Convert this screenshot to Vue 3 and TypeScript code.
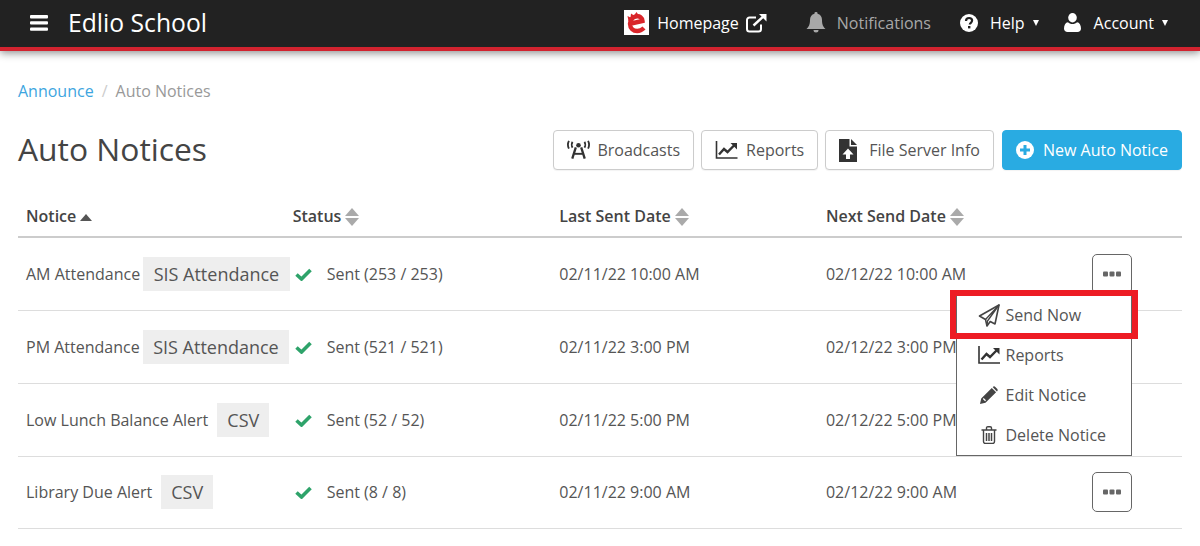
<script setup lang="ts">
interface Row {
  name: string
  tag: string
  sent: string
  last: string
  next: string
}
const rows: Row[] = [
  { name: 'AM Attendance', tag: 'SIS Attendance', sent: 'Sent (253 / 253)', last: '02/11/22 10:00 AM', next: '02/12/22 10:00 AM' },
  { name: 'PM Attendance', tag: 'SIS Attendance', sent: 'Sent (521 / 521)', last: '02/11/22 3:00 PM', next: '02/12/22 3:00 PM' },
  { name: 'Low Lunch Balance Alert', tag: 'CSV', sent: 'Sent (52 / 52)', last: '02/11/22 5:00 PM', next: '02/12/22 5:00 PM' },
  { name: 'Library Due Alert', tag: 'CSV', sent: 'Sent (8 / 8)', last: '02/11/22 9:00 AM', next: '02/12/22 9:00 AM' }
]
</script>

<template>
  <div class="page">
    <header class="nav">
      <div class="nav-left">
        <svg class="burger" width="18" height="16" viewBox="0 0 18 16"><rect y="0" width="18" height="3.4" rx="1" /><rect y="6.2" width="18" height="3.4" rx="1" /><rect y="12.4" width="18" height="3.4" rx="1" /></svg>
        <span class="brand">Edlio School</span>
      </div>
      <nav class="nav-right">
        <span class="nav-item home">
          <svg class="logo" width="25" height="25" viewBox="0 0 25 25"><rect width="25" height="25" fill="#fff" /><path d="M7 13.500 18.500 11C18.200 7.500 15.500 6 13 6.300 8.800 6.800 6 9.700 6 13.800 6 18.200 9.300 21 13.200 21c2.800 0 4.700-1 6.800-3" fill="none" stroke="#d9252a" stroke-width="4.400" /><path d="M4.500 11 3.500 6l3 1.500L7 3.500l3 2L12.500 2l2 3-5 4z" fill="#d9252a" /></svg>
          <span>Homepage</span>
          <svg class="ext" width="22" height="20" viewBox="0 0 22 20" fill="none" stroke="#fff" stroke-width="2"><path d="M15 11.500V16a2.500 2.500 0 0 1-2.500 2.500h-9A2.500 2.500 0 0 1 1 16V7a2.500 2.500 0 0 1 2.500-2.500H10" /><path d="M7.500 12.500 19 2" stroke-width="2.400" /><path d="M13 1h7.500v7.500z" fill="#fff" stroke="none" /></svg>
        </span>
        <span class="nav-item muted">
          <svg width="20" height="21" viewBox="0 0 20 21" fill="#a8a8a8"><path d="M10 0a1.500 1.500 0 0 1 1.500 1.800C14.500 2.500 16 5 16 8c0 5 1.500 7 3.500 9h-19C2.500 15 4 13 4 8c0-3 1.500-5.500 4.500-6.200A1.500 1.500 0 0 1 10 0z" /><path d="M7.500 18h5a2.500 2.500 0 0 1-5 0z" /></svg>
          <span>Notifications</span>
        </span>
        <span class="nav-item help">
          <svg width="18" height="18" viewBox="0 0 18 18"><circle cx="9" cy="9" r="9" fill="#fff" /><path d="M6 7c0-1.800 1.300-3 3.100-3 1.800 0 3 1.100 3 2.600 0 2.200-2.300 2.200-2.300 3.900" fill="none" stroke="#222" stroke-width="2.200" /><rect x="8" y="12" width="2.400" height="2.400" fill="#222" /></svg>
          <span>Help</span>
          <i class="caret"></i>
        </span>
        <span class="nav-item acct">
          <svg width="17" height="19" viewBox="0 0 17 19" fill="#fff"><ellipse cx="8.500" cy="4.700" rx="4.300" ry="4.700" /><path d="M0 15.500C0 12 1.500 9.500 4 9.200c1 1.200 2.800 1.800 4.500 1.800s3.500-.6 4.500-1.800c2.500.3 4 2.800 4 6.300 0 2.300-1.500 3.500-3.500 3.500h-10C1.500 19 0 17.800 0 15.500z" /></svg>
          <span>Account</span>
          <i class="caret"></i>
        </span>
      </nav>
    </header>

    <main class="content">
      <div class="crumbs">
        <a class="crumb-link">Announce</a>
        <span class="crumb-sep">/</span>
        <span class="crumb-cur">Auto Notices</span>
      </div>

      <div class="title-row">
        <h1 class="title">Auto Notices</h1>
        <div class="actions">
          <button class="btn tight">
            <svg width="23" height="20" viewBox="0 0 24 20" fill="none" stroke="#333"><path d="M9.200 7.200 5.500 19M14.800 7.200 18.500 19" stroke-width="2.400" /><path d="M7.500 14h9" stroke-width="2" /><circle cx="12" cy="5" r="2.400" fill="#333" stroke="none" /><path d="M5.800 1.500C4.700 3 4.700 6 5.800 7.500M18.200 1.500c1.100 1.500 1.100 4.500 0 6" stroke-width="1.900" /><path d="M2 0.500C.7 3 .7 6 2 8.500M22 .5c1.300 2.500 1.300 5.500 0 8" stroke-width="1.900" /></svg>
            Broadcasts
          </button>
          <button class="btn">
            <svg width="23" height="18" viewBox="0 0 22 18" fill="none" stroke="#333"><path d="M1 0v17h21" stroke-width="1.600" /><path d="M3.500 13.500 8.500 8l3.500 3 7-7" stroke-width="2.400" /><path d="M15 2h6.500v6.500z" fill="#333" stroke="none" /></svg>
            Reports
          </button>
          <button class="btn">
            <svg class="file-icon" width="18" height="23" viewBox="0 0 18 23" fill="#333"><path fill-rule="evenodd" d="M0 0h10.500v7.500H18V23H0zM9 9.500l-5.500 6h3.500V20h4v-4.500h3.500z" /><path d="M12 0l6 6h-6z" /></svg>
            File Server Info
          </button>
          <button class="btn primary">
            <svg width="18" height="18" viewBox="0 0 18 18"><circle cx="9" cy="9" r="9" fill="#fff" /><path d="M9 4v10M4 9h10" stroke="#29abe2" stroke-width="3" /></svg>
            New Auto Notice
          </button>
        </div>
      </div>

      <div class="table">
        <div class="row head">
          <div class="cell">Notice <svg class="asc" width="12" height="7" viewBox="0 0 12 7"><path d="M6 0l6 7H0z" fill="#555" /></svg></div>
          <div class="cell">Status <svg class="sort" width="14" height="18" viewBox="0 0 14 18"><path d="M7 0l7 8H0zM7 18l7-8H0z" fill="#aaa" /></svg></div>
          <div class="cell">Last Sent Date <svg class="sort" width="14" height="18" viewBox="0 0 14 18"><path d="M7 0l7 8H0zM7 18l7-8H0z" fill="#aaa" /></svg></div>
          <div class="cell">Next Send Date <svg class="sort" width="14" height="18" viewBox="0 0 14 18"><path d="M7 0l7 8H0zM7 18l7-8H0z" fill="#aaa" /></svg></div>
          <div class="cell"></div>
        </div>
        <div v-for="r in rows" :key="r.name" class="row body">
          <div class="cell name-cell">
            <span>{{ r.name }}</span>
            <span class="tag" :class="{ csv: r.tag === 'CSV' }">{{ r.tag }}</span>
          </div>
          <div class="cell status">
            <svg class="check" width="17" height="13" viewBox="0 0 17 13"><path d="M1.500 6.500 6.500 11 15.500 2" fill="none" stroke="#2ea36a" stroke-width="3.600" /></svg>
            <span>{{ r.sent }}</span>
          </div>
          <div class="cell">{{ r.last }}</div>
          <div class="cell">{{ r.next }}</div>
          <div class="cell more-cell">
            <button class="more" aria-label="More">
              <svg width="18" height="6" viewBox="0 0 18 6" fill="#666"><rect x="0" y="0.500" width="5" height="5" rx="1" /><rect x="6.500" y="0.500" width="5" height="5" rx="1" /><rect x="13" y="0.500" width="5" height="5" rx="1" /></svg>
            </button>
          </div>
        </div>
      </div>
    </main>

    <div class="menu">
      <div class="menu-item">
        <svg width="22" height="23" viewBox="0 0 22 23" fill="none" stroke="#444" stroke-width="1.600" stroke-linejoin="round"><path d="M21 1 1.500 12l6 3.500L9 22l3.200-4.500L17 20z" /><path d="M7.500 15.500 21 1 9.500 17 9 22" stroke-width="1.300" /></svg>
        <span>Send Now</span>
      </div>
      <div class="menu-item">
        <svg width="22" height="18" viewBox="0 0 22 18" fill="none" stroke="#333"><path d="M1 0v17h21" stroke-width="1.600" /><path d="M3.500 13.500 8.500 8l3.500 3 7-7" stroke-width="2.400" /><path d="M15 2h6.500v6.500z" fill="#333" stroke="none" /></svg>
        <span>Reports</span>
      </div>
      <div class="menu-item">
        <svg width="18" height="18" viewBox="0 0 18 18" fill="#444"><path d="M0 18l1.200-5.500L11.800 1.900l4.300 4.300L5.500 16.800zM2.800 12.900l2.300 2.300.9-.9-2.300-2.300z" fill-rule="evenodd" /><path d="M12.800.9a1.800 1.800 0 0 1 2.500 0l1.800 1.800a1.800 1.800 0 0 1 0 2.500l-.2.200-4.300-4.300z" /></svg>
        <span>Edit Notice</span>
      </div>
      <div class="menu-item">
        <svg class="trash" width="16" height="18" viewBox="0 0 16 18" fill="none" stroke="#444" stroke-width="1.400"><path d="M.5 4h15M2.500 4v11.500A2 2 0 0 0 4.500 17.500h7a2 2 0 0 0 2-2V4M5.500 4V2a1.300 1.300 0 0 1 1.300-1.300h2.400A1.300 1.300 0 0 1 10.500 2v2" /><path d="M5.500 7v8M8 7v8M10.500 7v8" stroke-width="1.500" /></svg>
        <span>Delete Notice</span>
      </div>
    </div>
    <div class="highlight"></div>
  </div>
</template>

<style>
html, body { margin: 0; background: #fff; }
</style>

<style scoped>
.page {
  position: relative;
  width: 1200px;
  height: 546px;
  overflow: hidden;
  background: #fff;
  font-family: "Open Sans", sans-serif;
  font-size: 16px;
  color: #555;
}
.nav {
  height: 47px;
  background: #222;
  border-bottom: 4px solid #d2232f;
  box-shadow: 0 2px 8px rgba(0, 0, 0, .45);
  display: flex;
  align-items: center;
  justify-content: space-between;
  color: #fff;
  padding: 0 32px 0 30px;
}
.nav-left { display: flex; align-items: center; gap: 20px; margin-top: -1px; }
.burger { fill: #fff; }
.brand { font-size: 24.700px; line-height: 46px; }
.nav-right { display: flex; align-items: center; margin-top: -2px; }
.nav-item { display: flex; align-items: center; font-size: 16px; }
.home { gap: 8px; margin-right: 38px; }
.home .ext { margin-left: -1px; }
.muted { gap: 11px; color: #a8a8a8; margin-right: 29px; }
.help { gap: 12px; margin-right: 25px; }
.help .caret { margin-left: -4px; }
.acct { gap: 13px; }
.caret {
  width: 0;
  height: 0;
  border-left: 3.500px solid transparent;
  border-right: 3.500px solid transparent;
  border-top: 6px solid #fff;
  margin-left: -5px;
}
.content { padding: 0 18px; }
.crumbs {
  margin-top: 29px;
  height: 22px;
  line-height: 22px;
  display: flex;
  gap: 8px;
}
.crumb-link { color: #3da5e0; }
.crumb-sep { color: #ccc; }
.crumb-cur { color: #999; }
.title-row {
  margin-top: 28px;
  height: 40px;
  display: flex;
  align-items: center;
  justify-content: space-between;
}
.title {
  margin: -4px 0 0;
  font-size: 31.800px;
  font-weight: 400;
  color: #444;
}
.actions { display: flex; gap: 7px; }
.actions .primary { margin-left: 1px; }
.btn {
  height: 40px;
  box-sizing: border-box;
  border: 1px solid #ccc;
  border-radius: 4px;
  background: #fff;
  color: #555;
  font: inherit;
  padding: 0 13px;
  display: flex;
  align-items: center;
  gap: 8px;
  box-shadow: 0 1px 1px rgba(0, 0, 0, .05);
}
.btn.tight { gap: 7px; }
.file-icon { margin-right: 4px; }
.btn.primary {
  background: #29abe2;
  border-color: #29abe2;
  color: #fff;
  gap: 9px;
}
.table { margin-top: 26px; }
.row {
  display: grid;
  grid-template-columns: 266.670px 266.670px 266.670px 266.670px 1fr;
  align-items: center;
}
.cell { padding: 0 8px; white-space: nowrap; }
.head {
  height: 40px;
  border-bottom: 2px solid #ccc;
  font-weight: 600;
  color: #444;
}
.head .cell { display: flex; align-items: center; gap: 4px; }
.asc { margin-top: 2px; }
.sort { margin-top: 2px; }
.body {
  height: 73px;
  box-sizing: border-box;
  border-bottom: 1px solid #ddd;
}
.body:last-child { height: 72px; padding-bottom: 1px; }
.name-cell { display: flex; align-items: center; gap: 3px; }
.tag {
  background: #eee;
  font-size: 18px;
  padding: 0 10.500px;
  line-height: 34px;
  height: 34px;
}
.tag.csv { padding: 0 10px; margin-left: 6px; }
.status { display: flex; align-items: center; gap: 15px; padding-left: 10px; }
.more-cell { display: flex; justify-content: flex-end; padding: 0; margin-right: 50px; }
.more {
  width: 40px;
  height: 40px;
  box-sizing: border-box;
  border: 1px solid #666;
  border-radius: 5px;
  background: #fff;
  padding: 0;
  display: flex;
  align-items: center;
  justify-content: center;
}
.menu {
  position: absolute;
  left: 956px;
  top: 293px;
  width: 176px;
  height: 163px;
  box-sizing: border-box;
  background: #fff;
  border: 1px solid #666;
  padding: 1px 0;
}
.menu-item {
  height: 40px;
  display: flex;
  align-items: center;
  gap: 5.500px;
  padding-left: 21px;
  color: #555;
}
.menu-item svg { flex: none; width: 22px; }
.highlight {
  position: absolute;
  left: 950px;
  top: 290px;
  width: 188px;
  height: 49px;
  box-sizing: border-box;
  border: 6px solid #ed1c24;
}
</style>
